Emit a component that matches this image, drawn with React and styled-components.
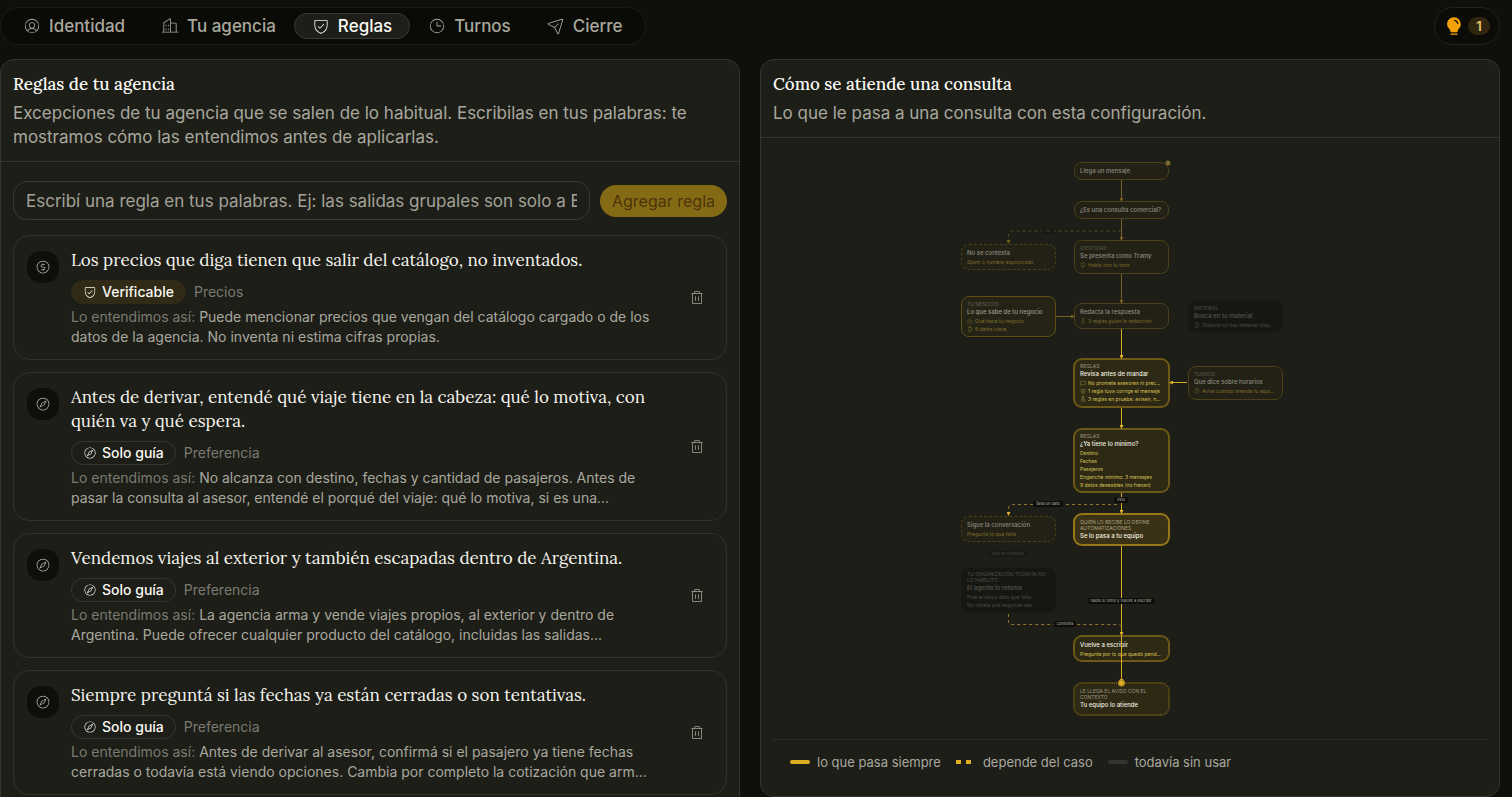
import React, { useState } from 'react';
import styled, { createGlobalStyle, css } from 'styled-components';
import {
    PiBuildingsLight,
    PiChatLight,
    PiClockLight,
    PiCompassLight,
    PiCurrencyCircleDollarLight,
    PiFilesLight,
    PiFlaskLight,
    PiLightbulbFill,
    PiPaperPlaneTiltLight,
    PiShieldCheckLight,
    PiSmileyLight,
    PiTrashLight,
    PiUserCircleLight,
} from 'react-icons/pi';

const GlobalStyle = createGlobalStyle`
    * {
        box-sizing: border-box;
    }

    body {
        margin: 0;
        background: #0f100b;
        color: #a9a89e;
        font-family: Inter, sans-serif;
        font-size: 17px;
        line-height: 24px;
    }

    h2, h3, p, ul {
        margin: 0;
        padding: 0;
        font-weight: 400;
    }

    button, input {
        font-family: inherit;
    }
`

const tabs = [
    { id: 'identidad', name: 'Identidad', icon: PiUserCircleLight },
    { id: 'agencia', name: 'Tu agencia', icon: PiBuildingsLight },
    { id: 'reglas', name: 'Reglas', icon: PiShieldCheckLight },
    { id: 'turnos', name: 'Turnos', icon: PiClockLight },
    { id: 'cierre', name: 'Cierre', icon: PiPaperPlaneTiltLight },
]

const initialRules = [
    {
        id: 1,
        title: 'Los precios que diga tienen que salir del catálogo, no inventados.',
        kind: 'Precios',
        verifiable: true,
        icon: PiCurrencyCircleDollarLight,
        text: 'Puede mencionar precios que vengan del catálogo cargado o de los datos de la agencia. No inventa ni estima cifras propias.',
    },
    {
        id: 2,
        title: 'Antes de derivar, entendé qué viaje tiene en la cabeza: qué lo motiva, con quién va y qué espera.',
        kind: 'Preferencia',
        icon: PiCompassLight,
        text: 'No alcanza con destino, fechas y cantidad de pasajeros. Antes de pasar la consulta al asesor, entendé el porqué del viaje: qué lo motiva, si es una...',
    },
    {
        id: 3,
        title: 'Vendemos viajes al exterior y también escapadas dentro de Argentina.',
        kind: 'Preferencia',
        icon: PiCompassLight,
        text: 'La agencia arma y vende viajes propios, al exterior y dentro de Argentina. Puede ofrecer cualquier producto del catálogo, incluidas las salidas...',
    },
    {
        id: 4,
        title: 'Siempre preguntá si las fechas ya están cerradas o son tentativas.',
        kind: 'Preferencia',
        icon: PiCompassLight,
        text: 'Antes de derivar al asesor, confirmá si el pasajero ya tiene fechas cerradas o todavía está viendo opciones. Cambia por completo la cotización que arm...',
    },
]

// look: dim | calm | off | strong | main
const nodes = [
    { id: 'llega', x: 113, y: 24, h: 18, look: 'dim', title: 'Llega un mensaje' },
    { id: 'comercial', x: 113, y: 63, h: 18, look: 'dim', title: '¿Es una consulta comercial?' },
    { id: 'nocontesta', x: 0, y: 106, h: 26, look: 'dim', line: 'dashed', title: 'No se contesta', details: [{ text: 'Spam o número equivocado' }] },
    { id: 'presenta', x: 113, y: 102, h: 34, look: 'dim', label: 'IDENTIDAD', title: 'Se presenta como Tramy', details: [{ icon: PiSmileyLight, text: 'Habla con tu tono' }] },
    { id: 'negocio', x: 0, y: 158, h: 41, look: 'calm', label: 'TU NEGOCIO', title: 'Lo que sabe de tu negocio', details: [{ icon: PiBuildingsLight, text: 'Qué hace tu negocio' }, { icon: PiFilesLight, text: '6 datos clave' }] },
    { id: 'redacta', x: 113, y: 165, h: 26, look: 'dim', title: 'Redacta la respuesta', details: [{ icon: PiFlaskLight, text: '3 reglas guían la redacción' }] },
    { id: 'material', x: 227, y: 162, h: 33, look: 'off', label: 'MATERIAL', title: 'Busca en tu material', details: [{ icon: PiFilesLight, text: 'Todavía no hay material disp...' }] },
    { id: 'revisa', x: 113, y: 221, h: 48, look: 'strong', label: 'REGLAS', title: 'Revisa antes de mandar', details: [{ icon: PiChatLight, text: 'No promete asesores ni prec...' }, { icon: PiShieldCheckLight, text: '1 regla tuya corrige el mensaje' }, { icon: PiFlaskLight, text: '3 reglas en prueba: avisan, n...' }] },
    { id: 'horarios', x: 227, y: 228, h: 34, look: 'dim', label: 'TURNOS', title: 'Qué dice sobre horarios', details: [{ icon: PiClockLight, text: 'Avisa cuándo atiende tu equi...' }] },
    { id: 'minimo', x: 113, y: 291, h: 63, look: 'strong', label: 'REGLAS', title: '¿Ya tiene lo mínimo?', details: [{ text: 'Destino' }, { text: 'Fechas' }, { text: 'Pasajeros' }, { text: 'Enganche mínimo: 3 mensajes' }, { text: '9 datos deseables (no frenan)' }] },
    { id: 'sigue', x: 0, y: 378, h: 26, look: 'dim', line: 'dashed', title: 'Sigue la conversación', details: [{ text: 'Pregunta lo que falta' }] },
    { id: 'pasa', x: 113, y: 376, h: 31, look: 'main', label: 'QUIÉN LO RECIBE LO DEFINE\nAUTOMATIZACIONES', title: 'Se lo pasa a tu equipo' },
    { id: 'retoma', x: 0, y: 429, h: 46, look: 'off', label: 'TU ORGANIZACIÓN TODAVÍA NO\nLO HABILITÓ', title: 'El agente lo retoma', details: [{ text: 'Pide el único dato que falta' }, { text: 'No insiste una segunda vez' }] },
    { id: 'vuelve', x: 113, y: 498, h: 25, look: 'strong', title: 'Vuelve a escribir', details: [{ text: 'Pregunta por lo que quedó pend...' }] },
    { id: 'atiende', x: 113, y: 545, h: 32, look: 'strong', line: 'dotted', label: 'LE LLEGA EL AVISO CON EL\nCONTEXTO', title: 'Tu equipo lo atiende' },
]

const edges = [
    { d: 'M160.5 42V62' },
    { d: 'M160.5 81V101' },
    { d: 'M160.5 93H52Q47.500 93 47.500 97V104', dashed: true, faint: true },
    { d: 'M160.5 136V164' },
    { d: 'M95 178.500H112' },
    { d: 'M160.5 191V219', on: true },
    { d: 'M160.5 270V289', on: true },
    { d: 'M226 244.500H210', on: true },
    { d: 'M160.5 355V374', on: true },
    { d: 'M156 366.500H52Q47.500 366.500 47.500 370V376', dashed: true, on: true, soft: true },
    { d: 'M160.5 408V496', on: true },
    { d: 'M160.5 496V543', on: true },
    { d: 'M47.500 476V484Q47.500 486.500 51 486.500H156Q160.500 486.500 160.500 490', dashed: true, on: true, soft: true, plain: true },
]

const edgeLabels = [
    { text: 'no', x: 87, y: 93, faint: true },
    { text: 'listo', x: 160, y: 362 },
    { text: 'falta un dato', x: 87, y: 366 },
    { text: 'deja de contestar', x: 47, y: 416, faint: true },
    { text: 'nadie lo tomó y vuelve a escribir', x: 160, y: 463 },
    { text: 'contesta', x: 104, y: 486 },
]

const looks = {
    dim: { bg: '#232116', border: '#4b4018', title: '#8d8b80', label: '#59574a', detail: '#7a6c2c' },
    calm: { bg: '#252315', border: '#5d4e16', title: '#9b998d', label: '#656252', detail: '#7f7030' },
    off: { bg: '#161712', border: '#191a15', title: '#56564e', label: '#4c4c45', detail: '#4c4c45' },
    strong: { bg: '#2d2915', border: '#6d5917', title: '#f0eee2', label: '#9b9781', detail: '#d8c253' },
    main: { bg: '#3a3116', border: '#977817', title: '#f7f4e6', label: '#a8a185', detail: '#d8c253' },
}

const Page = styled.div`
    height: 100vh;
    overflow: hidden;
    padding: 7px 12px 0 0;
`

const TopBar = styled.header`
    display: flex;
    align-items: center;
    justify-content: space-between;
    margin-bottom: 14px;
`

const Tabs = styled.nav`
    display: flex;
    align-items: center;
    height: 38px;
    padding: 0 4px;
    border: 1px solid #1b1c17;
    border-radius: 19px;
    background: #0a0b07;
`

const Tab = styled.button`
    display: flex;
    align-items: center;
    gap: 8px;
    height: 26px;
    padding: 0 17px;
    border: 1px solid ${props => props.$active ? '#393a33' : 'transparent'};
    border-radius: 13px;
    background: ${props => props.$active ? '#1d1e19' : 'transparent'};
    color: ${props => props.$active ? '#faf9f3' : '#a9a89e'};
    font-size: 17px;
    font-weight: 500;
    line-height: 24px;
    cursor: pointer;

    svg {
        width: 18px;
        height: 18px;
    }
`

const Tips = styled.button`
    display: flex;
    align-items: center;
    gap: 4px;
    height: 38px;
    padding: 0 9px;
    border: 1px solid #22231d;
    border-radius: 19px;
    background: #0b0c08;
    color: #f5a10c;
    cursor: pointer;

    svg {
        width: 20px;
        height: 20px;
    }
`

const Count = styled.span`
    width: 22px;
    border-radius: 9px;
    background: #31260f;
    color: #e6c962;
    font-size: 13px;
    font-weight: 600;
    line-height: 18px;
    text-align: center;
`

const Columns = styled.main`
    display: grid;
    grid-template-columns: 1fr 1fr;
    align-items: start;
    gap: 20px;
`

const Panel = styled.section`
    min-width: 0;
    border: 1px solid #34352e;
    border-radius: 14px;
    background: #1d1e18;
`

const PanelHead = styled.header`
    padding: 12px;
    border-bottom: 1px solid #34352e;
`

const PanelTitle = styled.h2`
    margin-bottom: 5px;
    color: #faf9f3;
    font-family: Lora, 'Liberation Serif', serif;
    font-size: 17px;
    font-weight: 500;
`

const PanelBody = styled.div`
    padding: 19px 12px 24px;
`

const AddForm = styled.form`
    display: flex;
    align-items: center;
    gap: 10px;
    margin-bottom: 15px;
`

const RuleInput = styled.input`
    flex: 1;
    min-width: 0;
    height: 39px;
    padding: 0 12px;
    border: 1px solid #393a33;
    border-radius: 14px;
    background: transparent;
    color: #faf9f3;
    font-size: 17px;

    &::placeholder {
        color: #a3a298;
        opacity: 1;
    }
`

const AddButton = styled.button`
    height: 32px;
    padding: 0 12px;
    border: 0;
    border-radius: 16px;
    background: #856a15;
    color: #4c340a;
    font-size: 16px;
    font-weight: 400;
`

const RuleList = styled.ul`
    display: flex;
    flex-direction: column;
    gap: 12px;
    list-style: none;
`

const RuleCard = styled.li`
    display: flex;
    gap: 12px;
    padding: 12px 13px;
    border: 1px solid #30312a;
    border-radius: 16px;
`

const RuleIcon = styled.div`
    display: flex;
    align-items: center;
    justify-content: center;
    flex: none;
    width: 32px;
    height: 32px;
    margin-top: 3px;
    border-radius: 14px;
    background: #0e0f0a;
    color: #b5b4aa;

    svg {
        width: 16px;
        height: 16px;
    }
`

const RuleContent = styled.div`
    flex: 1;
    min-width: 0;
`

const RuleTitle = styled.h3`
    color: #f5f4ed;
    font-family: Lora, 'Liberation Serif', serif;
    font-size: 17px;
`

const RuleMeta = styled.div`
    display: flex;
    align-items: center;
    gap: 8px;
    margin: 8px 0 3px;
    color: #7b7a71;
    font-size: 14px;
`

const Chip = styled.span`
    display: flex;
    align-items: center;
    gap: 5px;
    height: 24px;
    padding: 0 11px;
    border: 1px solid ${props => props.$gold ? '#302a16' : '#35362f'};
    border-radius: 12px;
    background: ${props => props.$gold ? '#302a16' : 'transparent'};
    color: #faf9f3;
    font-weight: 500;

    svg {
        width: 14px;
        height: 14px;
    }
`

const RuleText = styled.p`
    font-size: 14px;
    line-height: 20px;

    span {
        color: #7b7a71;
    }
`

const DeleteButton = styled.button`
    display: flex;
    align-items: center;
    justify-content: center;
    align-self: center;
    flex: none;
    width: 32px;
    height: 32px;
    padding: 0;
    border: 0;
    background: transparent;
    color: #a9a89e;
    cursor: pointer;

    svg {
        width: 16px;
        height: 16px;
    }
`

const Canvas = styled.div`
    position: relative;
    width: 338px;
    height: 601px;
    margin: 0 auto;
`

const Node = styled.div`
    position: absolute;
    left: ${props => props.$x}px;
    top: ${props => props.$y}px;
    display: flex;
    flex-direction: column;
    justify-content: center;
    width: 95px;
    height: ${props => props.$h}px;
    padding: 0 5px;
    border: 1px ${props => props.$line || 'solid'} ${props => looks[props.$look].border};
    border-radius: 8px;
    background: ${props => looks[props.$look].bg};

    ${props => (props.$look === 'strong' || props.$look === 'main') && css`
        box-shadow: 0 0 0 1px ${props.$line ? '#4b3f17' : looks[props.$look].border};
    `}
`

const NodeLabel = styled.div`
    color: ${props => looks[props.$look].label};
    font-size: 5px;
    line-height: 6px;
    white-space: pre;
`

const NodeTitle = styled.div`
    color: ${props => looks[props.$look].title};
    font-size: 6px;
    font-weight: 500;
    line-height: 10px;
    white-space: nowrap;
`

const NodeDetail = styled.div`
    display: flex;
    align-items: center;
    gap: 2px;
    color: ${props => looks[props.$look].detail};
    font-size: 5px;
    line-height: 8px;
    white-space: nowrap;

    svg {
        flex: none;
        width: 6px;
        height: 6px;
    }
`

const Edges = styled.svg`
    position: absolute;
    inset: 0;
`

const EdgeLabel = styled.span`
    position: absolute;
    left: ${props => props.$x}px;
    top: ${props => props.$y}px;
    transform: translate(-50%, -50%);
    padding: 0 3px;
    border-radius: 2px;
    background: ${props => props.$faint ? '#171813' : '#0c0d09'};
    color: ${props => props.$faint ? '#4c4c45' : '#b5b4aa'};
    font-size: 4px;
    line-height: 6px;
    white-space: nowrap;
`

const Legend = styled.div`
    display: flex;
    flex-wrap: wrap;
    gap: 15px;
    margin: 0 12px;
    padding: 12px 17px 24px;
    border-top: 1px solid #2d2e27;
    font-size: 13px;
    line-height: 20px;
`

const LegendItem = styled.span`
    display: flex;
    align-items: center;
    gap: 7px;
`

const Swatch = styled.span`
    width: 20px;
    height: 4px;
    border-radius: 2px;
    background: ${props => props.$kind === 'off' ? '#33342d' : '#e0ae22'};

    ${props => props.$kind === 'dashed' && css`
        border-radius: 0;
        background: repeating-linear-gradient(90deg, #e0ae22 0 5px, transparent 5px 10px);
    `}
`

function edgeColor(edge) {
    if (edge.faint) return '#54491f'
    if (edge.soft) return '#93762a'
    return edge.on ? '#dba925' : '#786120'
}

function arrowFor(edge) {
    if (edge.plain) return undefined
    return edge.on ? 'url(#arrow-on)' : 'url(#arrow-dim)'
}

function Flow() {
    return (
        <Canvas>
            {nodes.map(node => (
                <Node key={node.id} $x={node.x} $y={node.y} $h={node.h} $look={node.look} $line={node.line}>
                    {node.label && <NodeLabel $look={node.look}>{node.label}</NodeLabel>}
                    <NodeTitle $look={node.look}>{node.title}</NodeTitle>
                    {(node.details || []).map(detail => (
                        <NodeDetail key={detail.text} $look={node.look}>
                            {detail.icon && <detail.icon />}
                            <span>{detail.text}</span>
                        </NodeDetail>
                    ))}
                </Node>
            ))}

            <Edges width="338" height="601" fill="none" aria-hidden="true">
                <defs>
                    <marker id="arrow-on" markerUnits="userSpaceOnUse" markerWidth="4" markerHeight="4" refX="2" refY="2" orient="auto">
                        <path d="M0 0L4 2L0 4Z" fill="#e3b22c" />
                    </marker>
                    <marker id="arrow-dim" markerUnits="userSpaceOnUse" markerWidth="4" markerHeight="4" refX="2" refY="2" orient="auto">
                        <path d="M0 0L4 2L0 4Z" fill="#786120" />
                    </marker>
                </defs>
                {edges.map(edge => (
                    <path
                        key={edge.d}
                        d={edge.d}
                        stroke={edgeColor(edge)}
                        strokeWidth="1"
                        strokeDasharray={edge.dashed ? '3 3' : undefined}
                        markerEnd={arrowFor(edge)}
                    />
                ))}
                <circle cx="207" cy="25" r="2.500" fill="#80692c" />
                <circle cx="160.500" cy="545" r="3.500" fill="#b98f1d" />
                <circle cx="160.500" cy="545" r="2" fill="#e3b22c" />
            </Edges>

            {edgeLabels.map(label => (
                <EdgeLabel key={label.text} $x={label.x} $y={label.y} $faint={label.faint}>{label.text}</EdgeLabel>
            ))}
        </Canvas>
    )
}

function Rule({ rule, onDelete }) {
    const ChipIcon = rule.verifiable ? PiShieldCheckLight : PiCompassLight

    return (
        <RuleCard>
            <RuleIcon><rule.icon /></RuleIcon>
            <RuleContent>
                <RuleTitle>{rule.title}</RuleTitle>
                <RuleMeta>
                    <Chip $gold={rule.verifiable}>
                        <ChipIcon />
                        {rule.verifiable ? 'Verificable' : 'Solo guía'}
                    </Chip>
                    {rule.kind}
                </RuleMeta>
                <RuleText><span>Lo entendimos así:</span> {rule.text}</RuleText>
            </RuleContent>
            <DeleteButton type="button" aria-label="Eliminar regla" onClick={() => onDelete(rule.id)}>
                <PiTrashLight />
            </DeleteButton>
        </RuleCard>
    )
}

export default function App() {
    const [tab, setTab] = useState('reglas')
    const [rules, setRules] = useState(initialRules)
    const [draft, setDraft] = useState('')

    const onDelete = id => {
        setRules(rules.filter(rule => rule.id !== id))
    }

    const onSubmit = evt => {
        evt.preventDefault()
        setDraft('')
    }

    return (
        <Page>
            <GlobalStyle />
            <TopBar>
                <Tabs>
                    {tabs.map(item => (
                        <Tab key={item.id} type="button" $active={item.id === tab} onClick={() => setTab(item.id)}>
                            <item.icon />
                            {item.name}
                        </Tab>
                    ))}
                </Tabs>
                <Tips type="button" aria-label="Sugerencias">
                    <PiLightbulbFill />
                    <Count>1</Count>
                </Tips>
            </TopBar>

            <Columns>
                <Panel>
                    <PanelHead>
                        <PanelTitle>Reglas de tu agencia</PanelTitle>
                        <p>Excepciones de tu agencia que se salen de lo habitual. Escribilas en tus palabras: te mostramos cómo las entendimos antes de aplicarlas.</p>
                    </PanelHead>
                    <PanelBody>
                        <AddForm onSubmit={onSubmit}>
                            <RuleInput
                                type="text"
                                name="rule"
                                aria-label="Nueva regla"
                                value={draft}
                                onChange={evt => setDraft(evt.target.value)}
                                placeholder="Escribí una regla en tus palabras. Ej: las salidas grupales son solo a Europa"
                            />
                            <AddButton disabled={!draft}>Agregar regla</AddButton>
                        </AddForm>
                        <RuleList>
                            {rules.map(rule => (
                                <Rule key={rule.id} rule={rule} onDelete={onDelete} />
                            ))}
                        </RuleList>
                    </PanelBody>
                </Panel>

                <Panel>
                    <PanelHead>
                        <PanelTitle>Cómo se atiende una consulta</PanelTitle>
                        <p>Lo que le pasa a una consulta con esta configuración.</p>
                    </PanelHead>
                    <Flow />
                    <Legend>
                        <LegendItem><Swatch />lo que pasa siempre</LegendItem>
                        <LegendItem><Swatch $kind="dashed" />depende del caso</LegendItem>
                        <LegendItem><Swatch $kind="off" />todavía sin usar</LegendItem>
                    </Legend>
                </Panel>
            </Columns>
        </Page>
    )
}
